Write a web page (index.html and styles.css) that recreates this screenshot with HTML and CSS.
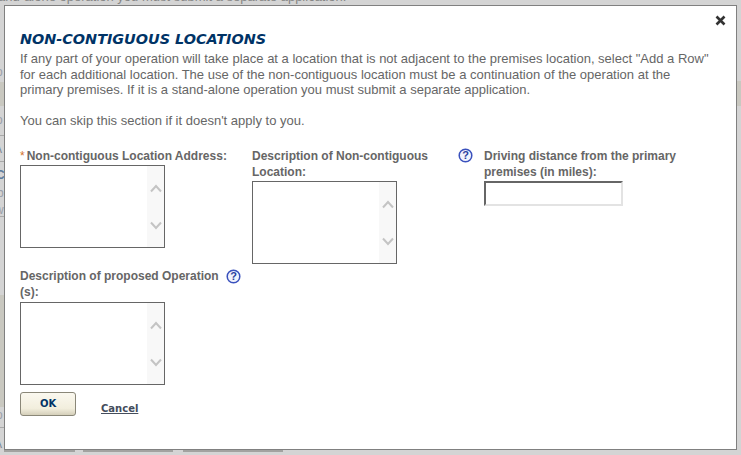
FILE: index.html
```html
<!DOCTYPE html>
<html lang="en">
<head>
<meta charset="utf-8">
<title>Non-contiguous Locations</title>
<link rel="stylesheet" href="styles.css">
</head>
<body>
<div class="backdrop">
  <p class="behind-text">stand-alone operation you must submit a separate application.</p>
  <div class="behind-band band-left"></div>
  <div class="behind-band band-left-low"></div>
  <div class="behind-band band-right"></div>
  <div class="behind-rule rule-a"></div>
  <div class="behind-rule rule-b"></div>
  <div class="behind-rule rule-c"></div>
  <div class="behind-rule rule-d"></div>
  <div class="behind-btn btn-a"></div>
  <div class="behind-btn btn-b"></div>
  <div class="behind-btn btn-c"></div>
  <span class="behind-mark mark-a">C</span>
  <span class="behind-mark mark-b">b</span>
  <span class="behind-mark mark-c">w</span>
  <span class="behind-mark mark-d">o</span>
  <span class="behind-mark mark-e">o</span>
  <span class="behind-mark mark-f">A</span>
  <span class="behind-mark mark-g">A</span>
  <span class="behind-mark mark-h">o</span>
</div>
<div class="modal">
  <svg class="close" viewBox="0 0 11 11" aria-label="Close"><path d="M1.5 1.5l8 8M9.5 1.5l-8 8" fill="none" stroke="#333" stroke-width="2.6"/></svg>
  <h1 class="title">NON-CONTIGUOUS LOCATIONS</h1>
  <p class="intro">If any part of your operation will take place at a location that is not adjacent to the premises location, select "Add a Row" for each additional location. The use of the non-contiguous location must be a continuation of the operation at the primary premises. If it is a stand-alone operation you must submit a separate application.</p>
  <p class="intro skip">You can skip this section if it doesn't apply to you.</p>
  <div class="form-grid">
    <div class="field">
      <div class="label-row"><label class="label"><span class="req">*</span>Non-contiguous Location Address:</label></div>
      <div class="area"><div class="scroll"><svg viewBox="0 0 12 9"><path d="M1 7.5l5-5.5 5 5.5" /></svg><svg viewBox="0 0 12 9"><path d="M1 1.5l5 5.5 5-5.5"/></svg></div></div>
    </div>
    <div class="field">
      <div class="label-row"><label class="label wrap-b">Description of Non-contiguous Location:</label>
        <svg class="help help-b" viewBox="0 0 15 15"><circle cx="7.5" cy="7.5" r="6.3" fill="#f1f3fc" stroke="#3a51bd" stroke-width="1.5"/><text x="7.5" y="11.2" text-anchor="middle" class="help-q">?</text></svg></div>
      <div class="area"><div class="scroll"><svg viewBox="0 0 12 9"><path d="M1 7.5l5-5.5 5 5.5" /></svg><svg viewBox="0 0 12 9"><path d="M1 1.5l5 5.5 5-5.5"/></svg></div></div>
    </div>
    <div class="field">
      <div class="label-row"><label class="label wrap-c">Driving distance from the primary premises (in miles):</label></div>
      <div class="text-input"></div>
    </div>
    <div class="field second">
      <div class="label-row"><label class="label wrap-d">Description of proposed Operation (s):</label>
        <svg class="help help-d" viewBox="0 0 15 15"><circle cx="7.5" cy="7.5" r="6.3" fill="#f1f3fc" stroke="#3a51bd" stroke-width="1.5"/><text x="7.5" y="11.2" text-anchor="middle" class="help-q">?</text></svg></div>
      <div class="area area-low"><div class="scroll"><svg viewBox="0 0 12 9"><path d="M1 7.5l5-5.5 5 5.5" /></svg><svg viewBox="0 0 12 9"><path d="M1 1.5l5 5.5 5-5.5"/></svg></div></div>
    </div>
  </div>
  <div class="actions">
    <button class="ok" type="button">OK</button>
    <a class="cancel" href="#">Cancel</a>
  </div>
</div>
</body>
</html>
```
FILE: styles.css
```css
* { box-sizing: border-box; }
html, body { margin: 0; height: 100%; overflow: hidden; }
body { background: #d4d4d4; font-family: "Liberation Sans", Arial, sans-serif; font-size: 12px; color: #666; }

.backdrop { position: absolute; inset: 0; overflow: hidden; }
.behind-text { position: absolute; left: -12px; top: -11px; margin: 0; font-size: 13px; color: #858585; white-space: nowrap; }
.behind-band { position: absolute; background: #c9c8c0; }
.band-left { left: 0; top: 82px; width: 4px; height: 24px; }
.band-left-low { left: 0; top: 295px; width: 4px; height: 112px; }
.band-right { left: 737px; top: 81px; width: 4px; height: 25px; }
.behind-rule { position: absolute; left: 0; width: 4px; height: 1px; background: #a9a9a9; }
.rule-a { top: 135px; }
.rule-b { top: 161px; }
.rule-c { top: 216px; }
.rule-d { top: 427px; }
.behind-btn { position: absolute; top: 449px; height: 3px; background: #a2a2a0; }
.btn-a { left: 4px; width: 71px; }
.btn-b { left: 83px; width: 90px; }
.btn-c { left: 183px; width: 100px; }
.behind-mark { position: absolute; left: -4px; font-size: 12px; color: #9aa0aa; }
.mark-a { top: 168px; font-weight: bold; color: #5f7d9f; }
.mark-b { top: 186px; left: -3px; }
.mark-c { top: 203px; left: -5px; }
.mark-d { top: 65px; }
.mark-e { top: 113px; }
.mark-f { top: 142px; left: -6px; color: #7c8894; }
.mark-g { top: 437px; left: -6px; color: #7c8894; }
.mark-h { top: 408px; }

.modal { position: absolute; left: 4px; top: 5px; width: 733px; height: 445px; background: #fff; border: 1px solid #808080; padding: 24px 15px 0; }
.close { position: absolute; right: 10px; top: 9px; width: 11px; height: 11px; }
.title { margin: 0; font: italic bold 14.4px/18px "DejaVu Sans", Verdana, sans-serif; color: #003366; }
.intro { margin: 3px 0 0; font-size: 13px; line-height: 15.5px; width: 695px; color: #666; }
.skip { margin-top: 15px; }

.form-grid { display: grid; grid-template-columns: 232px 232px 232px; margin-top: 20px; }
.second { grid-column: 1; margin-top: 4px; }
.label-row { display: flex; align-items: flex-start; }
.label { display: block; font-weight: bold; line-height: 16px; color: #666; }
.wrap-b { width: 190px; }
.wrap-c { width: 220px; }
.wrap-d { width: 200px; }
.req { color: #d4702a; font-weight: normal; margin-right: 2px; }
.help { width: 15px; height: 15px; flex: none; }
.help-b { margin-left: 16px; }
.help-d { margin-left: 6px; margin-top: 1px; }
.help-q { font: bold 11px "Liberation Sans", sans-serif; fill: #2a3f9e; }

.area { width: 145px; height: 83px; margin-top: 1px; border: 1px solid #666; background: #fff; display: flex; justify-content: flex-end; }
.area-low { margin-top: 2px; }
.scroll { width: 17px; background: #f8f8f8; display: flex; flex-direction: column; align-items: center; justify-content: space-between; padding: 18px 0 17px; }
.scroll svg { width: 12px; height: 9px; }
.scroll path { fill: none; stroke: #c4c4c4; stroke-width: 2; }

.text-input { width: 139px; height: 25px; margin-top: 1px; border: 2px solid; border-color: #666 #e3e3e3 #e3e3e3 #666; background: #fff; }

.actions { display: flex; align-items: flex-start; margin-top: 7px; }
.ok { width: 56px; height: 24px; padding: 0 0 2px; border: 1px solid #8a8778; border-radius: 3px; background: linear-gradient(#faf8ef, #f2eedd 70%, #d4cfba); font: bold 10px "DejaVu Sans", Verdana, sans-serif; color: #003366; }
.cancel { margin: 11px 0 0 25px; font: bold 10px "DejaVu Sans", Verdana, sans-serif; color: #444d5c; text-decoration: underline; }
```
